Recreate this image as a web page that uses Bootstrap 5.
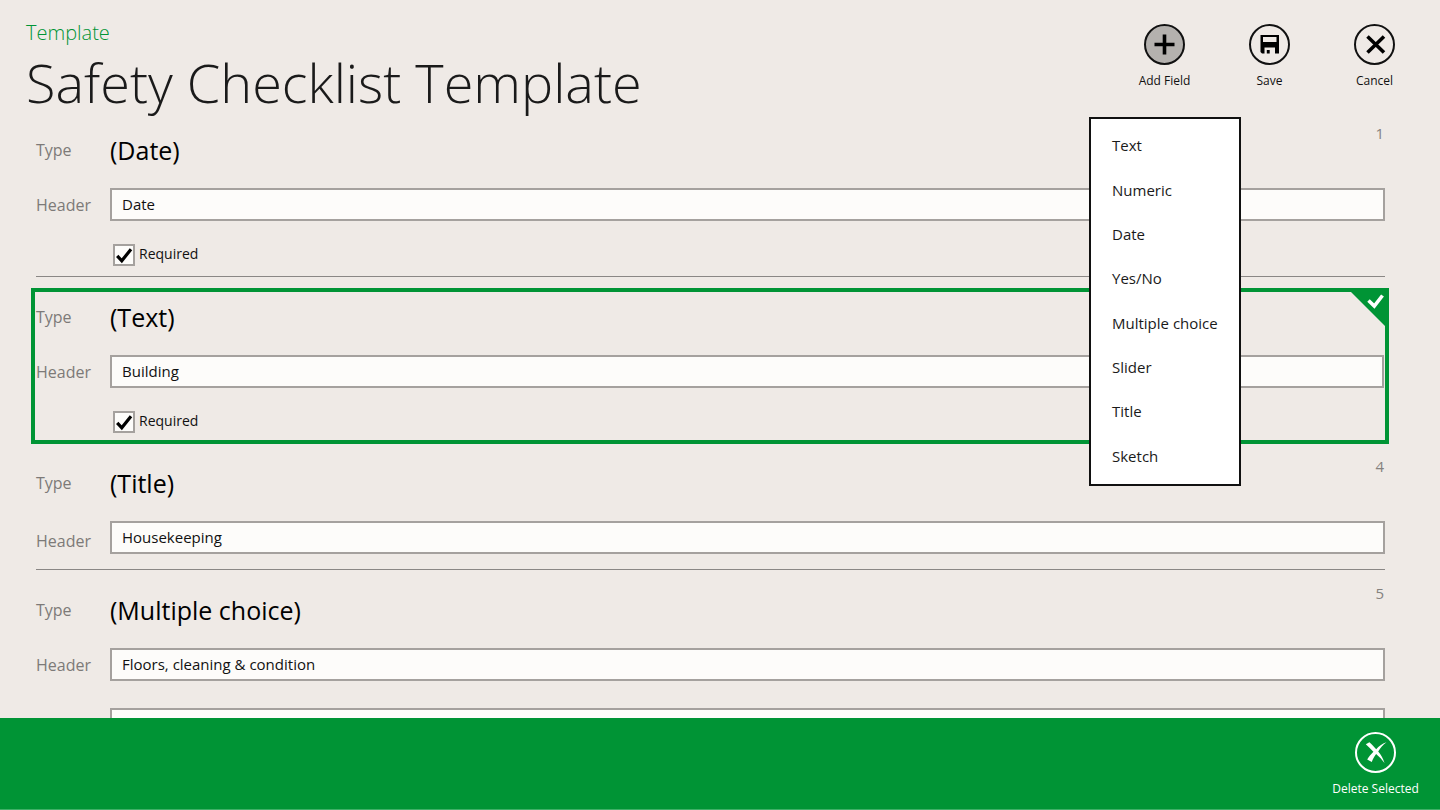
<!DOCTYPE html>
<html lang="en">
<head>
<meta charset="utf-8">
<meta name="viewport" content="width=device-width, initial-scale=1">
<title>Safety Checklist Template</title>
<link href="https://cdn.jsdelivr.net/npm/bootstrap@5.3.0/dist/css/bootstrap.min.css" rel="stylesheet">
<style>
  :root { --brand: #009435; --paper: #efeae6; --edge: #a5a19e; }
  body { font-family: "Segoe UI", "Open Sans", "Noto Sans", sans-serif; background: var(--paper); color: #111; }
  .page-kicker { font-size: 20px; line-height: 26px; font-weight: 300; color: var(--brand); }
  .page-title { font-size: 54px; line-height: 72px; font-weight: 300; color: #1a1a1a; }
  .top-bar { height: 121px; padding: 20px 13px 0 26px; }
  .command { width: 105px; font-size: 12px; line-height: 16px; color: inherit; background: none; }
  .command svg { width: 41px; height: 41px; }
  .command-label { margin-top: 8px; }
  .add-menu { top: 93px; left: -23px; width: 152px; height: 369px; padding: 4px 0 6px; background: #fff; border: 2px solid #111; z-index: 10; }
  .add-menu button { font-size: 15px; line-height: 20px; padding: 0 21px; color: #1a1a1a; white-space: nowrap; }
  .entries { padding: 0 51px 0 31px; }
  .entry { padding: 4px 4px 0 5px; margin-bottom: 11px; }
  .entry-body { border-bottom: 1px solid #8a8785; padding-bottom: 10px; }
  .entry-short .entry-body { padding-bottom: 15px; }
  .entry-short label { padding-top: 6px; }
  .entry.selected { border: 4px solid var(--brand); padding: 0 1px; margin-bottom: 10px; }
  .entry.selected .entry-body { padding-bottom: 7px; border-bottom: 0; }
  .type-row { height: 50px; margin-bottom: 13px; }
  .name-label { width: 74px; flex: none; font-size: 16px; line-height: 24px; color: #7d7a78; }
  .type-name { font-size: 25px; line-height: 34px; color: #000; }
  .entry-number { top: 2px; right: 5px; font-size: 15px; line-height: 20px; color: #85827f; }
  .entry-input { height: 33px; padding: 0 10px 2px; font-size: 15px; border: 2px solid var(--edge); background: #fdfcfa; color: #111; }
  .second-input { margin: 27px 0 0 74px; }
  .check-row { margin: 23px 0 0 77px; height: 22px; font-size: 14px; line-height: 20px; }
  .tick { width: 22px; height: 22px; appearance: none; margin: 0; border: 2px solid var(--edge); background: #fdfcfa url("data:image/svg+xml,%3Csvg xmlns='http://www.w3.org/2000/svg' viewBox='0 0 18 18'%3E%3Cpath d='M2.2 9.8l4.6 5L16 3.2' fill='none' stroke='%23000' stroke-width='3.2'/%3E%3C/svg%3E"); }
  .corner { top: 0; right: 0; width: 34px; height: 34px; }
  .app-bar { height: 92px; padding: 14px 12px 0; background: var(--brand); color: #fff; border-bottom: 1px solid #3fb068; }
</style>
</head>
<body>
<div class="vh-100 d-flex flex-column overflow-hidden">
  <header class="top-bar d-flex justify-content-between flex-shrink-0">
    <div>
      <div class="page-kicker">Template</div>
      <h1 class="page-title m-0">Safety Checklist Template</h1>
    </div>
    <div class="d-flex align-items-start pt-1">
      <div class="position-relative">
        <button type="button" class="command border-0 p-0 d-flex flex-column align-items-center" aria-expanded="true">
          <svg viewBox="0 0 41 41" aria-hidden="true"><circle cx="20.5" cy="20.5" r="19.5" fill="#b4b1ae" stroke="#111" stroke-width="2"/><path d="M20.500 10.500v20M10.500 20.500h20" stroke="#000" stroke-width="3.600"/></svg>
          <span class="command-label">Add Field</span>
        </button>
        <div class="add-menu position-absolute d-flex flex-column" role="menu">
          <button type="button" role="menuitem" class="flex-fill border-0 bg-transparent text-start">Text</button>
          <button type="button" role="menuitem" class="flex-fill border-0 bg-transparent text-start">Numeric</button>
          <button type="button" role="menuitem" class="flex-fill border-0 bg-transparent text-start">Date</button>
          <button type="button" role="menuitem" class="flex-fill border-0 bg-transparent text-start">Yes/No</button>
          <button type="button" role="menuitem" class="flex-fill border-0 bg-transparent text-start">Multiple choice</button>
          <button type="button" role="menuitem" class="flex-fill border-0 bg-transparent text-start">Slider</button>
          <button type="button" role="menuitem" class="flex-fill border-0 bg-transparent text-start">Title</button>
          <button type="button" role="menuitem" class="flex-fill border-0 bg-transparent text-start">Sketch</button>
        </div>
      </div>
      <button type="button" class="command border-0 p-0 d-flex flex-column align-items-center">
        <svg viewBox="0 0 41 41" aria-hidden="true"><circle cx="20.500" cy="20.500" r="19.500" fill="none" stroke="#111" stroke-width="2"/><path fill="#000" fill-rule="evenodd" d="M11.500 11h18.500v18.500h-4v-6H15.500v6h-2.500L11.500 28zM14 13v5h13.500v-5zM17.800 26h2.900v3.500h-2.900z"/></svg>
        <span class="command-label">Save</span>
      </button>
      <button type="button" class="command border-0 p-0 d-flex flex-column align-items-center">
        <svg viewBox="0 0 41 41" aria-hidden="true"><circle cx="20.500" cy="20.500" r="19.500" fill="none" stroke="#111" stroke-width="2"/><path d="M13.500 12.500l16.500 16M30 12.500L13.500 28.500" stroke="#000" stroke-width="3.600"/></svg>
        <span class="command-label">Cancel</span>
      </button>
    </div>
  </header>

  <main class="entries flex-grow-1 overflow-hidden">
    <section class="entry position-relative">
      <div class="entry-body">
        <div class="type-row d-flex align-items-center"><span class="name-label">Type</span><span class="type-name">(Date)</span></div>
        <span class="entry-number position-absolute">1</span>
        <div class="d-flex align-items-center"><label class="name-label" for="h1">Header</label><input id="h1" type="text" class="entry-input form-control rounded-0" value="Date"></div>
        <div class="check-row d-flex"><input id="r1" type="checkbox" class="tick" checked><label for="r1" class="ps-1">Required</label></div>
      </div>
    </section>
    <section class="entry selected position-relative">
      <div class="entry-body">
        <div class="type-row d-flex align-items-center"><span class="name-label">Type</span><span class="type-name">(Text)</span></div>
        <svg class="corner position-absolute" viewBox="0 0 34 34" aria-hidden="true"><path d="M0 0h34v34z" fill="#009435"/><path d="M17.500 8.500l5.800 5.500L31.500 3.500" fill="none" stroke="#fff" stroke-width="3.600"/></svg>
        <div class="d-flex align-items-center"><label class="name-label" for="h2">Header</label><input id="h2" type="text" class="entry-input form-control rounded-0" value="Building"></div>
        <div class="check-row d-flex"><input id="r2" type="checkbox" class="tick" checked><label for="r2" class="ps-1">Required</label></div>
      </div>
    </section>
    <section class="entry entry-short position-relative">
      <div class="entry-body">
        <div class="type-row d-flex align-items-center"><span class="name-label">Type</span><span class="type-name">(Title)</span></div>
        <span class="entry-number position-absolute">4</span>
        <div class="d-flex align-items-center"><label class="name-label" for="h3">Header</label><input id="h3" type="text" class="entry-input form-control rounded-0" value="Housekeeping"></div>
      </div>
    </section>
    <section class="entry position-relative">
      <div class="entry-body">
        <div class="type-row d-flex align-items-center"><span class="name-label">Type</span><span class="type-name">(Multiple choice)</span></div>
        <span class="entry-number position-absolute">5</span>
        <div class="d-flex align-items-center"><label class="name-label" for="h4">Header</label><input id="h4" type="text" class="entry-input form-control rounded-0" value="Floors, cleaning &amp; condition"></div>
        <div class="second-input"><input type="text" class="entry-input form-control rounded-0" aria-label="Choices"></div>
      </div>
    </section>
  </main>

  <footer class="app-bar d-flex justify-content-end flex-shrink-0">
    <button type="button" class="command border-0 p-0 d-flex flex-column align-items-center">
      <svg viewBox="0 0 41 41" aria-hidden="true"><circle cx="20.500" cy="20.500" r="19.500" fill="none" stroke="#fff" stroke-width="2"/><path fill="#fff" d="M10.800 12.300l3.600-2c2.800 2.200 4.600 4.500 6.800 7 2.800-3 5.600-5.400 10.300-7-3.600 2.800-6.200 5.600-8.300 9.200 2.800 3.500 4.900 6.800 6.300 11.600-2.400-3.500-5-6.300-8.400-9.200-2 2.700-3.200 5-4.300 8l-4.600-2.400c1.600-2.700 3.700-5 6.200-7.700-2.400-2.500-4.900-5-7.600-7.500z"/></svg>
      <span class="command-label text-nowrap">Delete Selected</span>
    </button>
  </footer>
</div>
<script src="https://cdn.jsdelivr.net/npm/bootstrap@5.3.0/dist/js/bootstrap.bundle.min.js"></script>
</body>
</html>
